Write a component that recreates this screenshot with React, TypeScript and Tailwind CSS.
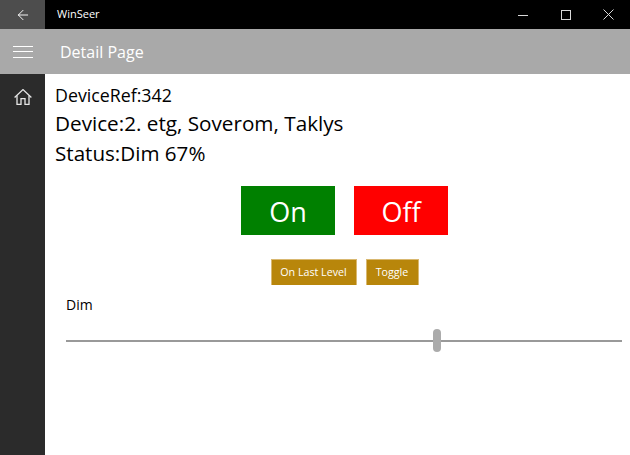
import { ArrowLeft } from 'lucide-react';

function HomeIcon() {
  return (
    <svg width="18" height="16" viewBox="0 0 18 16" fill="none" stroke="currentColor" strokeWidth="1.3">
      <path d="M0.6 8.4 L9 0.6 L17.4 8.4" />
      <path d="M3 6.4 V15.3 H7 V9.6 H11 V15.3 H15 V6.4" />
    </svg>
  );
}

export default function App() {
  return (
    <div className="flex h-[455px] w-[630px] flex-col overflow-hidden bg-white font-['Open_Sans',sans-serif] text-black">
      {/* Title bar */}
      <div className="flex h-[29px] shrink-0 items-center bg-black text-white">
        <div className="flex h-full w-[45px] items-center justify-center bg-[#4d4d4d]">
          <ArrowLeft className="h-[16px] w-[16px]" strokeWidth={1.4} />
        </div>
        <span className="ml-[12px] flex-1 text-[11px]">WinSeer</span>
        <div className="flex h-full items-center text-[#d8d8d8]">
          <div className="flex w-[43px] justify-center">
            <svg width="10" height="10" viewBox="0 0 10 10" stroke="currentColor" fill="none">
              <path d="M0 5.5 H10" />
            </svg>
          </div>
          <div className="flex w-[43px] justify-center">
            <svg width="10" height="10" viewBox="0 0 10 10" stroke="currentColor" fill="none">
              <rect x="0.5" y="0.5" width="9" height="9" />
            </svg>
          </div>
          <div className="flex w-[43px] justify-center">
            <svg width="11" height="11" viewBox="0 0 11 11" stroke="currentColor" fill="none">
              <path d="M0.5 0.5 L10.5 10.5 M10.5 0.5 L0.5 10.5" />
            </svg>
          </div>
        </div>
      </div>

      {/* Page header */}
      <div className="flex h-[45px] shrink-0 items-center bg-[#a9a9a9] text-white">
        <div className="flex w-[45px] justify-center">
          <div className="flex w-[20px] flex-col gap-[4.5px]">
            <div className="h-px bg-white" />
            <div className="h-px bg-white" />
            <div className="h-px bg-white" />
          </div>
        </div>
        <span className="ml-[15px] pt-[1px] text-[16px] leading-[24px]">Detail Page</span>
      </div>

      <div className="flex flex-1">
        {/* Side nav */}
        <div className="flex w-[45px] shrink-0 justify-center bg-[#2b2b2b] pt-[15px] text-[#e6e6e6]">
          <div className="h-[16px]">
            <HomeIcon />
          </div>
        </div>

        {/* Content */}
        <div className="flex-1">
          <div className="pl-[10px] pt-[8px]">
            <div className="text-[17.8px] leading-[27px]">DeviceRef:342</div>
            <div className="text-[20.7px] leading-[29px]">Device:2. etg, Soverom, Taklys</div>
            <div className="text-[20.6px] leading-[30px]">Status:Dim 67%</div>
          </div>

          <div className="mt-[18px] flex justify-center gap-[19px] pl-[14px] text-white">
            <div className="flex h-[49px] w-[94px] items-center justify-center bg-[#008000] pt-[3px] text-[27px]">On</div>
            <div className="flex h-[49px] w-[94px] items-center justify-center bg-[#ff0000] pt-[3px] text-[27px]">Off</div>
          </div>

          <div className="mt-[24px] flex justify-center gap-[9px] pl-[14px] text-[10.7px] text-white">
            <div className="flex h-[26px] w-[86px] items-center justify-center border border-b-0 border-[#d9b870] bg-[#b8860b]">On Last Level</div>
            <div className="flex h-[26px] w-[53px] items-center justify-center border border-b-0 border-[#d9b870] bg-[#b8860b]">Toggle</div>
          </div>

          <div className="pl-[21px] pt-[10px] text-[14px] leading-[20px]">Dim</div>

          {/* Slider */}
          <div className="relative ml-[21px] mr-[8px] mt-[25px] h-[2px] bg-[#999999]">
            <div className="absolute left-[367px] top-[-11px] h-[23px] w-[8px] rounded-full bg-[#ababab]" />
          </div>
        </div>
      </div>
    </div>
  );
}
